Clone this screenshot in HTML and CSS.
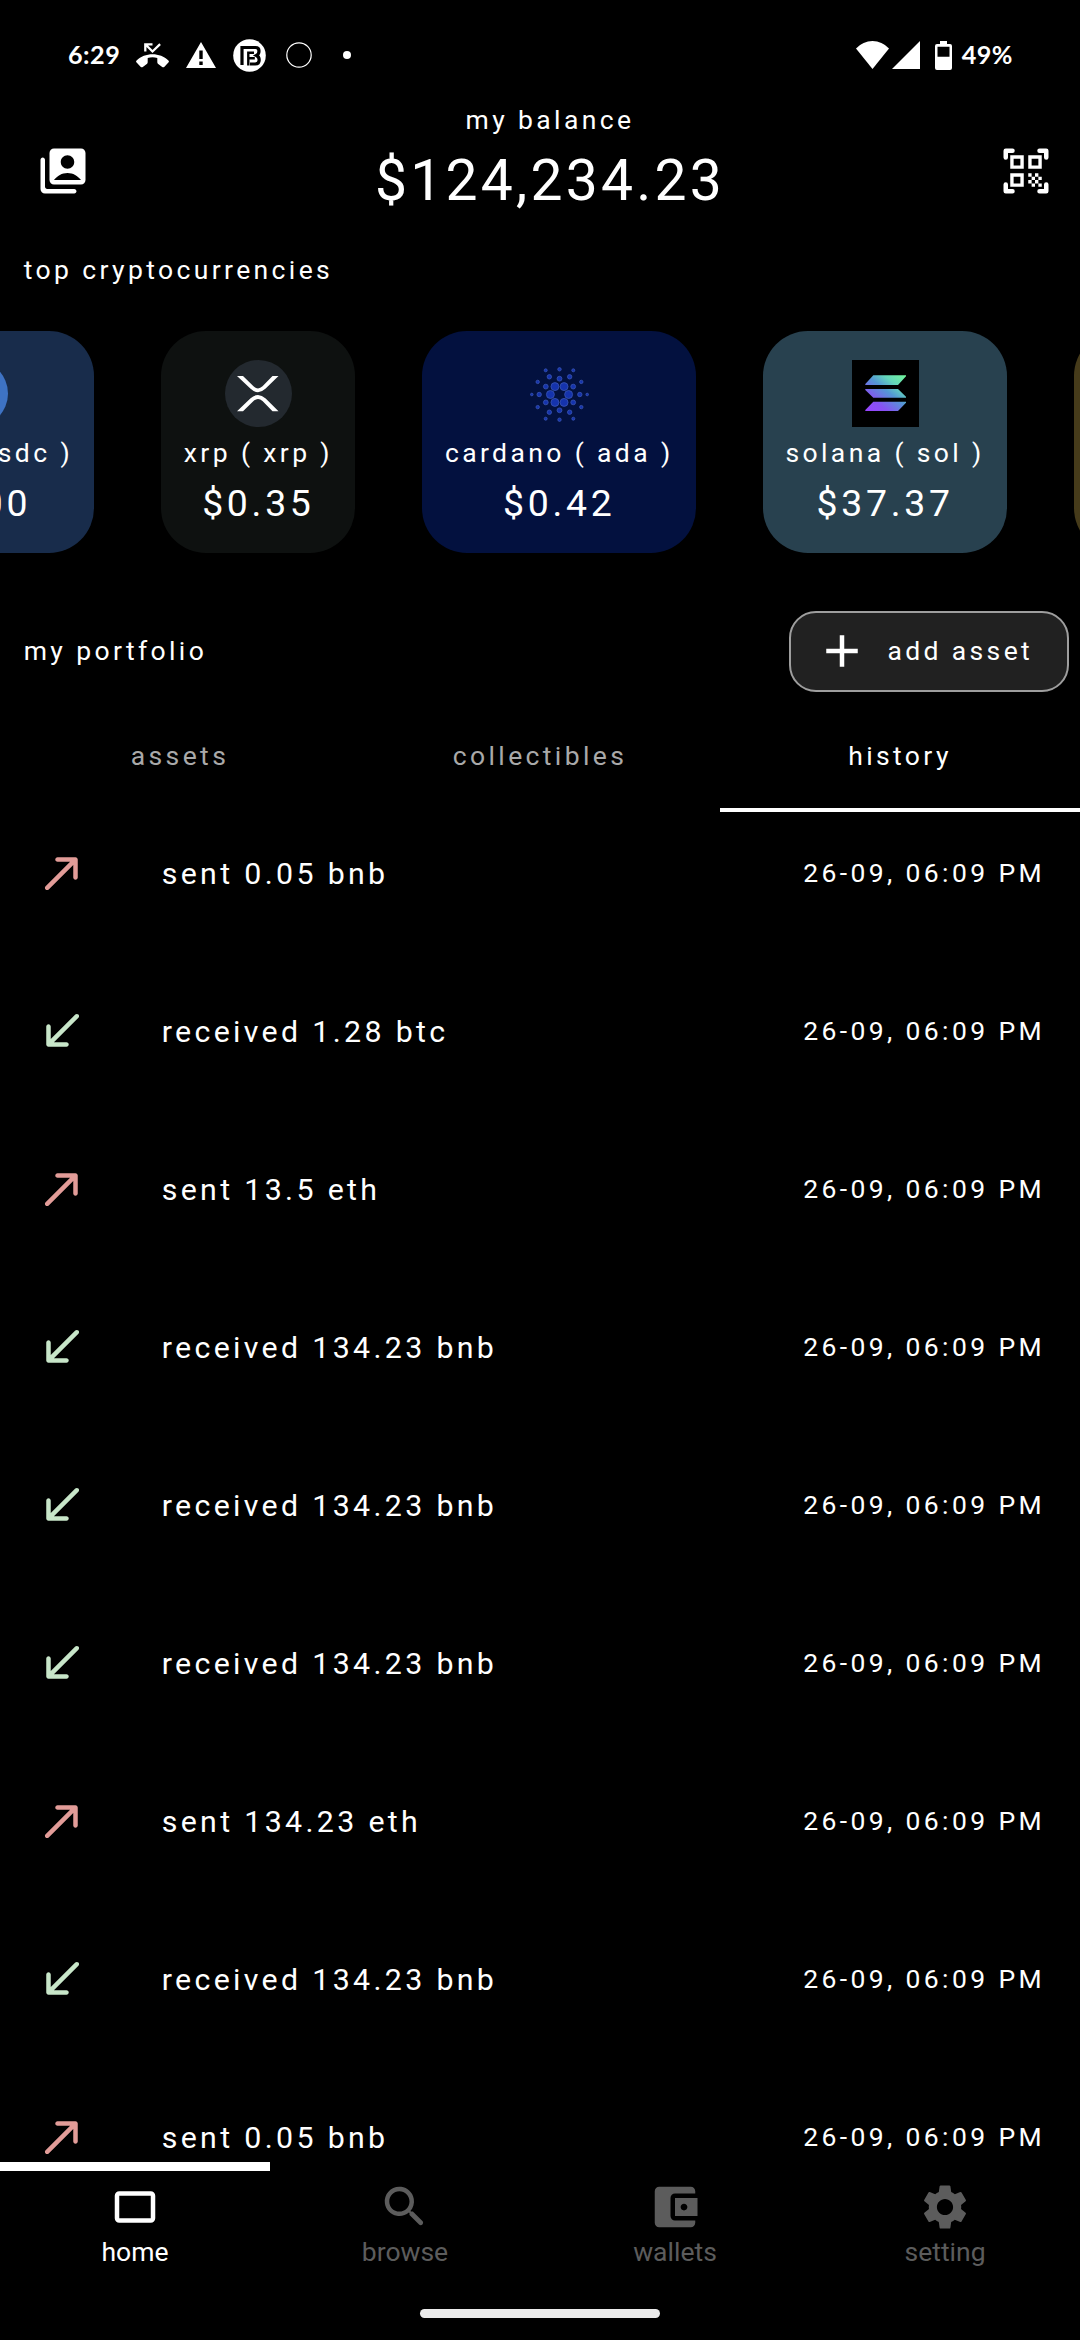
FILE: index.html
```html
<!DOCTYPE html>
<html lang="en">
<head>
<meta charset="utf-8">
<title>Wallet</title>
<link rel="stylesheet" href="styles.css">
</head>
<body>
<svg class="defs" width="0" height="0" aria-hidden="true">
  <symbol id="sent" viewBox="0 0 24 24"><path d="M9 6c0 .56.45 1 1 1h5.59L4.7 17.89c-.39.39-.39 1.02 0 1.41.39.39 1.02.39 1.41 0L17 8.41V14c0 .55.45 1 1 1s1-.45 1-1V6c0-.55-.45-1-1-1h-8c-.55 0-1 .45-1 1z"/></symbol>
  <symbol id="received" viewBox="0 0 24 24"><path d="M15 18c0-.56-.45-1-1-1H8.41L19.3 6.11c.39-.39.39-1.02 0-1.41-.39-.39-1.02-.39-1.41 0L7 15.59V10c0-.55-.45-1-1-1s-1 .45-1 1v8c0 .55.45 1 1 1h8c.55 0 1-.45 1-1z"/></symbol>
</svg>
<div class="screen">
  <div class="status">
    <div class="status-left">
      <span class="status-text">6:29</span>
      <svg class="i-call" viewBox="0 0 33 25"><path d="M16.500 11.300C10.500 11.300 4.800 13.500.6 17.400c-.7.700-.7 1.400 0 2.100l4.200 4.400c.6.600 1.300.6 2 .1l4-3c.6-.5.9-.9.9-1.700V15c3.100-.9 6.500-.9 9.600 0v4.300c0 .8.3 1.200.9 1.700l4 3c.7.500 1.400.5 2-.1l4.200-4.400c.7-.7.7-1.400 0-2.100-4.200-3.900-9.900-6.100-15.900-6.100z"/><path d="M9.300 8.500V1.300h7.200M9.300 1.300l7.200 7.200 7.600-7.300" fill="none" stroke="currentColor" stroke-width="2.300"/></svg>
      <svg class="i-warn" viewBox="0 0 30 26"><path fill-rule="evenodd" d="M15 0l15 26H0zM13.300 8.500v8.500h3.400V8.500zm0 11v3.400h3.400v-3.400z"/></svg>
      <svg class="i-b" viewBox="0 0 33 33"><circle cx="16.500" cy="16.500" r="16.300"/><g fill="none" stroke="#000"><path d="M9 26V8.500h13.500q3.500 0 3.500 3.500 0 3.200-2.500 4.500 2.700 1.300 2.700 4.500 0 4-4 4H17" stroke-width="3.200"/><path d="M15.300 26.500V13.700H21M15.300 19.300h6.500" stroke-width="2.400"/></g></svg>
      <svg class="i-ring" viewBox="0 0 26 26"><circle cx="13" cy="13" r="12.200" fill="none" stroke="currentColor" stroke-width="1.200"/></svg>
      <span class="status-dot"></span>
    </div>
    <div class="status-right">
      <svg class="i-wifi" viewBox="0 0 33 28"><path d="M0 7.500Q7 0 16.500 0T33 7.500L16.500 28z"/></svg>
      <svg class="i-signal" viewBox="0 0 28 28"><path d="M28 0v28H0z"/></svg>
      <svg class="i-battery" viewBox="0 0 17 29"><path fill-rule="evenodd" d="M5 0h7v3h3q2 0 2 2v22q0 2-2 2H2q-2 0-2-2V5q0-2 2-2h3zM2.500 5.700v10h12v-10z"/></svg>
      <span class="status-text">49%</span>
    </div>
  </div>

  <header class="header">
    <svg class="icon icon-account" viewBox="0 0 24 24"><path d="M3 6c-.55 0-1 .45-1 1v13c0 1.100.9 2 2 2h13c.55 0 1-.45 1-1s-.45-1-1-1H5c-.55 0-1-.45-1-1V7c0-.55-.45-1-1-1z"/><path fill-rule="evenodd" d="M20 2H8c-1.100 0-2 .9-2 2v12c0 1.100.9 2 2 2h12c1.100 0 2-.9 2-2V4c0-1.100-.9-2-2-2zm-6 3c1.660 0 3 1.340 3 3s-1.340 3-3 3-3-1.340-3-3 1.340-3 3-3zM8 16c1.470-1.830 3.500-3.100 6-3.100s4.530 1.270 6 3.100z"/></svg>
    <div class="balance">
      <div class="label">my balance</div>
      <div class="amount">$124,234.23</div>
    </div>
    <svg class="icon icon-scan" viewBox="0 0 24 24"><path d="M9.500 6.500v3h-3v-3h3M11 5H5v6h6V5zm-1.500 9.500v3h-3v-3h3M11 13H5v6h6v-6zm6.500-6.500v3h-3v-3h3M19 5h-6v6h6V5zm-6 8h1.500v1.500H13V13zm1.500 1.500H16V16h-1.500v-1.500zM16 13h1.500v1.500H16V13zm-3 3h1.500v1.500H13V16zm1.500 1.500H16V19h-1.500v-1.500zM16 16h1.500v1.500H16V16zm1.500-1.500H19V16h-1.500v-1.500zm0 3H19V19h-1.500v-1.500z"/><path d="M3 6V3h3M18 3h3v3M21 18v3h-3M6 21H3v-3" fill="none" stroke="currentColor" stroke-width="2" stroke-linecap="round" stroke-linejoin="round"/></svg>
  </header>

  <h2 class="label heading">top cryptocurrencies</h2>
  <div class="coins">
    <div class="coin-edge">
      <div class="coin usdc">
        <svg class="coin-logo" viewBox="0 0 67 67"><circle cx="33.500" cy="33.500" r="33.500" fill="#3e73c4"/></svg>
        <div class="label">usdc ( usdc )</div>
        <div class="price">$1.00</div>
      </div>
    </div>
    <div class="coin xrp">
      <svg class="coin-logo" viewBox="0 0 67 67"><circle cx="33.500" cy="33.500" r="33.500" fill="#23292f"/><g fill="#fff"><path d="M12 16h6l10.500 10.300q4.500 4.200 9 0L47.500 16h6L40.700 28.600q-7.700 7.200-15.400 0z"/><path d="M12 51.300h6l10.500-10.300q4.500-4.200 9 0l10 10.300h6L40.700 38.500q-7.700-7.200-15.400 0z"/></g></svg>
      <div class="label">xrp ( xrp )</div>
      <div class="price">$0.35</div>
    </div>
    <div class="coin ada">
      <svg class="coin-logo" viewBox="-33.500 -34.500 67 67">
        <g fill="#1533ad" stroke="#3a56b4" stroke-width=".8">
          <g><circle cx="9.100" r="4"/><circle cx="-9.100" r="4"/><circle cx="4.550" cy="7.900" r="4"/><circle cx="-4.550" cy="7.900" r="4"/><circle cx="4.550" cy="-7.900" r="4"/><circle cx="-4.550" cy="-7.900" r="4"/></g>
          <g><circle cy="15.800" r="2.400"/><circle cy="-15.800" r="2.400"/><circle cx="13.700" cy="7.900" r="2.400"/><circle cx="-13.700" cy="7.900" r="2.400"/><circle cx="13.700" cy="-7.900" r="2.400"/><circle cx="-13.700" cy="-7.900" r="2.400"/></g>
          <g><circle cx="20.300" r="2.200"/><circle cx="-20.300" r="2.200"/><circle cx="10.150" cy="17.700" r="2.200"/><circle cx="-10.150" cy="17.700" r="2.200"/><circle cx="10.150" cy="-17.700" r="2.200"/><circle cx="-10.150" cy="-17.700" r="2.200"/></g>
          <g><circle cy="25.200" r="1.700"/><circle cy="-25.200" r="1.700"/><circle cx="21.800" cy="12.600" r="1.700"/><circle cx="-21.800" cy="12.600" r="1.700"/><circle cx="21.800" cy="-12.600" r="1.700"/><circle cx="-21.800" cy="-12.600" r="1.700"/></g>
          <g><circle cx="27.700" r="1.300"/><circle cx="-27.700" r="1.300"/><circle cx="13.800" cy="24.200" r="1.500"/><circle cx="-13.800" cy="24.200" r="1.500"/><circle cx="13.800" cy="-24.200" r="1.500"/><circle cx="-13.800" cy="-24.200" r="1.500"/></g>
        </g>
      </svg>
      <div class="label">cardano ( ada )</div>
      <div class="price">$0.42</div>
    </div>
    <div class="coin sol">
      <svg class="coin-logo" viewBox="0 0 67 67"><defs><linearGradient id="g" gradientUnits="userSpaceOnUse" x1="18" y1="54" x2="50" y2="13"><stop offset="0" stop-color="#9945ff"/><stop offset=".25" stop-color="#8752f3"/><stop offset=".55" stop-color="#5497d5"/><stop offset=".75" stop-color="#63d6bb"/><stop offset="1" stop-color="#72f59c"/></linearGradient></defs><rect width="67" height="67" fill="#000"/><path fill="url(#g)" d="M21.300 15.300H54v1L46 25H13.300v-1zM13.300 29H46l8 7.700v1H21.300l-8-7.700zM21.300 41.700H54v1L46 51H13.300v-1z"/></svg>
      <div class="label">solana ( sol )</div>
      <div class="price">$37.37</div>
    </div>
    <div class="coin next"></div>
  </div>

  <div class="portfolio">
    <h2 class="label">my portfolio</h2>
    <button class="add">
      <svg class="icon" viewBox="0 0 24 24"><path d="M19 13h-6v6h-2v-6H5v-2h6V5h2v6h6z"/></svg>
      <span class="label">add asset</span>
    </button>
  </div>

  <div class="tabs">
    <div class="tab label">assets</div>
    <div class="tab label">collectibles</div>
    <div class="tab label active">history</div>
  </div>

  <div class="list">
    <div class="row"><svg class="icon out"><use href="#sent"/></svg><span class="title">sent 0.05 bnb</span><span class="label">26-09, 06:09 PM</span></div>
    <div class="row"><svg class="icon in"><use href="#received"/></svg><span class="title">received 1.28 btc</span><span class="label">26-09, 06:09 PM</span></div>
    <div class="row"><svg class="icon out"><use href="#sent"/></svg><span class="title">sent 13.5 eth</span><span class="label">26-09, 06:09 PM</span></div>
    <div class="row"><svg class="icon in"><use href="#received"/></svg><span class="title">received 134.23 bnb</span><span class="label">26-09, 06:09 PM</span></div>
    <div class="row"><svg class="icon in"><use href="#received"/></svg><span class="title">received 134.23 bnb</span><span class="label">26-09, 06:09 PM</span></div>
    <div class="row"><svg class="icon in"><use href="#received"/></svg><span class="title">received 134.23 bnb</span><span class="label">26-09, 06:09 PM</span></div>
    <div class="row"><svg class="icon out"><use href="#sent"/></svg><span class="title">sent 134.23 eth</span><span class="label">26-09, 06:09 PM</span></div>
    <div class="row"><svg class="icon in"><use href="#received"/></svg><span class="title">received 134.23 bnb</span><span class="label">26-09, 06:09 PM</span></div>
    <div class="row"><svg class="icon out"><use href="#sent"/></svg><span class="title">sent 0.05 bnb</span><span class="label">26-09, 06:09 PM</span></div>
  </div>

  <nav class="nav">
    <div class="nav-item active"><svg class="icon" viewBox="0 0 24 24"><rect x="4" y="6" width="16" height="12" rx="1" fill="none" stroke="currentColor" stroke-width="2"/></svg><span>home</span></div>
    <div class="nav-item"><svg class="icon" viewBox="0 0 24 24"><path d="M15.500 14h-.79l-.28-.27c1.200-1.400 1.820-3.310 1.480-5.340-.47-2.780-2.790-5-5.590-5.340-4.230-.52-7.790 3.040-7.270 7.270.34 2.800 2.560 5.120 5.340 5.590 2.030.34 3.940-.28 5.340-1.480l.27.28v.79l4.250 4.250c.41.410 1.080.410 1.490 0 .410-.410.410-1.080 0-1.490L15.500 14zm-6 0C7.010 14 5 11.990 5 9.500S7.010 5 9.500 5 14 7.010 14 9.500 11.990 14 9.500 14z"/></svg><span>browse</span></div>
    <div class="nav-item"><svg class="icon" viewBox="0 0 24 24"><path d="M21 18v1c0 1.100-.9 2-2 2H5c-1.110 0-2-.9-2-2V5c0-1.100.89-2 2-2h14c1.100 0 2 .9 2 2v1h-9c-1.110 0-2 .9-2 2v8c0 1.100.89 2 2 2h9zm-9-2h10V8H12v8zm4-2.500c-.83 0-1.500-.67-1.500-1.500s.67-1.500 1.500-1.500 1.500.67 1.500 1.500-.67 1.500-1.500 1.500z"/></svg><span>wallets</span></div>
    <div class="nav-item"><svg class="icon" viewBox="0 0 24 24"><path d="M19.140 12.940c.04-.3.06-.61.06-.94 0-.32-.02-.64-.07-.94l2.030-1.580c.18-.14.23-.41.12-.61l-1.920-3.320c-.12-.22-.37-.29-.59-.22l-2.390.96c-.5-.38-1.030-.7-1.620-.94l-.36-2.540c-.04-.24-.24-.41-.48-.41h-3.840c-.24 0-.43.17-.47.41l-.36 2.540c-.59.24-1.130.57-1.620.94l-2.390-.96c-.22-.08-.47 0-.59.22L2.740 8.870c-.12.21-.08.47.12.61l2.030 1.580c-.05.3-.09.63-.09.94s.02.64.07.94l-2.030 1.580c-.18.14-.23.41-.12.61l1.920 3.320c.12.22.37.29.59.22l2.390-.96c.5.38 1.030.7 1.620.94l.36 2.540c.05.24.24.41.48.41h3.840c.24 0 .44-.17.47-.41l.36-2.540c.59-.24 1.130-.56 1.620-.94l2.390.96c.22.08.47 0 .59-.22l1.920-3.320c.12-.22.07-.47-.12-.61l-2.010-1.580zM12 15.600c-1.980 0-3.600-1.620-3.600-3.600s1.620-3.600 3.600-3.600 3.600 1.620 3.600 3.600-1.620 3.600-3.600 3.600z"/></svg><span>setting</span></div>
  </nav>
  <div class="gesture"><div class="gesture-bar"></div></div>
</div>
</body>
</html>
```
FILE: styles.css
```css
* { box-sizing: border-box; margin: 0; padding: 0; }
html, body { background: #000; }
body { font-family: Roboto, "Liberation Sans", sans-serif; color: #fff; }
svg { display: block; flex: none; fill: currentColor; overflow: visible; }
.defs { position: absolute; }

.screen { width: 1080px; height: 2340px; display: flex; flex-direction: column; overflow: hidden; }
.label { font-size: 26.5px; line-height: 32px; font-weight: 400; letter-spacing: 3.375px; white-space: nowrap; }
.icon { width: 54px; height: 54px; }

.status { flex: none; height: 104px; padding: 6px 67px 0 68px; display: flex; justify-content: space-between; }
.status-left, .status-right { height: 98px; display: flex; align-items: center; }
.status-text { font: 700 25.2px/30px Lato, sans-serif; letter-spacing: .5px; padding-bottom: 2px; }
.i-call { width: 33px; height: 25px; margin-left: 16px; }
.i-warn { width: 30px; height: 26px; margin-left: 17px; }
.i-b { width: 33px; height: 33px; margin-left: 17px; }
.i-ring { width: 26px; height: 26px; margin-left: 20px; }
.status-dot { width: 8px; height: 8px; border-radius: 50%; background: #fff; margin-left: 31px; }
.i-wifi { width: 33px; height: 28px; }
.i-signal { width: 28px; height: 28px; margin-left: 3px; }
.i-battery { width: 17px; height: 29px; margin: 0 10px 0 15px; }

.header { flex: none; height: 110.5px; display: grid; grid-template-columns: 100px 900px 80px; align-items: start; }
.icon-account { margin: 39.5px 0 0 35.5px; }
.icon-scan { margin: 39.5px 0 0 -.7px; }
.balance { display: flex; flex-direction: column; align-items: center; gap: 10.5px; }
.amount { font-size: 57px; line-height: 68px; letter-spacing: 3.2px; }

.heading { margin: 39px 0 45.5px 23.7px; }

.coins { flex: none; display: flex; gap: 67px; height: 221.7px; overflow: hidden; }
.coin-edge { flex: none; width: 94.3px; display: flex; justify-content: flex-end; }
.coin { flex: none; height: 221.7px; padding: 29px 22.5px 0; border-radius: 45px; display: flex; flex-direction: column; align-items: center; }
.coin-logo { width: 67px; height: 67px; margin-bottom: 10.3px; }
.price { font-size: 37.4px; line-height: 44px; letter-spacing: 3.7px; margin-top: 12px; }
.usdc { background: #182c4b; padding: 29px 21.3px 0; }
.xrp { background: #0e1110; }
.ada { background: #03113f; }
.sol { background: #28414f; }
.next { background: #463b1a; width: 240px; }

.portfolio { flex: none; height: 80.5px; margin-top: 58.5px; padding: 0 11.3px 0 23.7px; display: flex; align-items: center; justify-content: space-between; }
.add { width: 280px; height: 80.5px; padding-left: 24px; display: flex; align-items: center; gap: 18.7px; background: #212121; border: 2.25px solid #9e9e9e; border-radius: 27px; color: #fff; font-family: inherit; }

.tabs { flex: none; height: 120px; display: grid; grid-template-columns: repeat(3, 1fr); }
.tab { padding-top: 48px; text-align: center; color: #a9a9a9; border-bottom: 4.5px solid transparent; }
.tab.active { color: #fff; border-color: #fff; }

.list { flex: 1; min-height: 0; overflow: hidden; display: flex; flex-direction: column; gap: 34.4px; }
.row { flex: none; height: 123.6px; padding: 0 35px; display: flex; align-items: center; }
.title { flex: 1; margin-left: 72.7px; padding-top: 1.5px; font-size: 30.3px; line-height: 36px; letter-spacing: 3.35px; }
.out { color: #e29c98; }
.in { color: #c8e6c9; }

.nav { flex: none; height: 120px; display: grid; grid-template-columns: repeat(4, 1fr); }
.nav-item { display: flex; flex-direction: column; align-items: center; border-top: 9.7px solid transparent; padding-top: 9px; color: #5c5c5c; font-size: 26.5px; line-height: 30px; }
.nav-item .icon { margin-bottom: 3px; }
.nav-item.active { color: #fff; border-color: #fff; }
.gesture { flex: none; height: 58px; display: flex; justify-content: center; padding-top: 27px; }
.gesture-bar { width: 240px; height: 9px; border-radius: 4.5px; background: #ebebeb; }
```
